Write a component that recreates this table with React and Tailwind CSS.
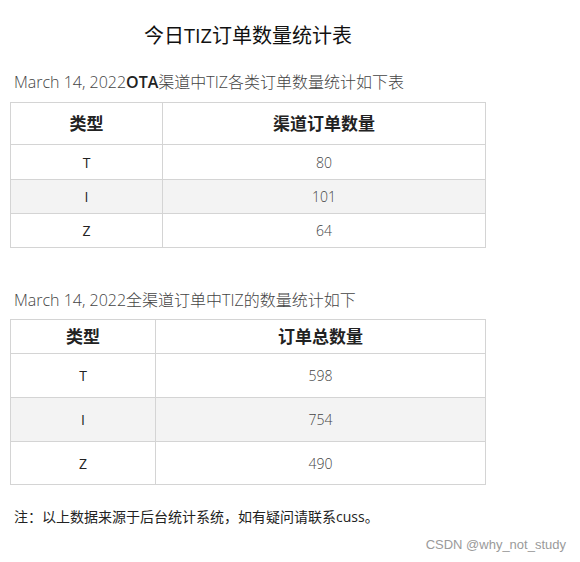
const FONT = { fontFamily: '"Open Sans", "Noto Sans CJK SC", sans-serif' };

function Table({ col1, head1, head2, rows, headH, rowH }) {
  return (
    <table className="ml-[10px] w-[476px] border-collapse border border-[#d4d4d4]">
      <colgroup>
        <col style={{ width: col1 }} />
        <col />
      </colgroup>
      <thead>
        <tr className={headH}>
          <th className="border border-[#d4d4d4] p-0 text-[17px] font-semibold text-[#222]">{head1}</th>
          <th className="border border-[#d4d4d4] p-0 text-[17px] font-semibold text-[#222]">{head2}</th>
        </tr>
      </thead>
      <tbody>
        {rows.map((r, i) => (
          <tr key={r[0]} className={`${rowH[i]} ${i === 1 ? 'bg-[#f3f3f3]' : 'bg-white'}`}>
            <td className="border border-[#d4d4d4] p-0 text-center text-[14px] text-[#222]">{r[0]}</td>
            <td className="border border-[#d4d4d4] p-0 text-center text-[14px] font-light text-[#444]">{r[1]}</td>
          </tr>
        ))}
      </tbody>
    </table>
  );
}

export default function App() {
  return (
    <div className="w-[580px] h-[562px] bg-white flex flex-col" style={FONT}>
      <div className="ml-[10px] w-[476px] pt-[21px] text-center text-[20px] leading-[30px] text-[#111]">
        今日TIZ订单数量统计表
      </div>
      <div className="mt-[19px] ml-[14px] text-[16px] leading-[24px] text-[#444] font-light">
        March 14, 2022<span className="font-semibold text-[#222]">OTA</span>渠道中TIZ各类订单数量统计如下表
      </div>
      <div className="mt-[8px]">
        <Table
          col1="152px"
          head1="类型"
          head2="渠道订单数量"
          rows={[["T", "80"], ["I", "101"], ["Z", "64"]]}
          headH="h-[42px]"
          rowH={["h-[35px]", "h-[34px]", "h-[34px]"]}
        />
      </div>
      <div className="mt-[40px] ml-[14px] text-[16px] leading-[24px] text-[#444] font-light">
        March 14, 2022全渠道订单中TIZ的数量统计如下
      </div>
      <div className="mt-[7px]">
        <Table
          col1="145px"
          head1="类型"
          head2="订单总数量"
          rows={[["T", "598"], ["I", "754"], ["Z", "490"]]}
          headH="h-[34px]"
          rowH={["h-[44px]", "h-[44px]", "h-[43px]"]}
        />
      </div>
      <div className="mt-[22px] ml-[14px] text-[14px] leading-[20px] text-[#222]">
        注：以上数据来源于后台统计系统，如有疑问请联系cuss。
      </div>
      <div
        className="mt-[10px] pr-[14px] text-right text-[13px] leading-[16px] text-[#9a9a9a]"
        style={{ fontFamily: '"Liberation Sans", Arial, sans-serif' }}
      >
        CSDN @why_not_study
      </div>
    </div>
  );
}
